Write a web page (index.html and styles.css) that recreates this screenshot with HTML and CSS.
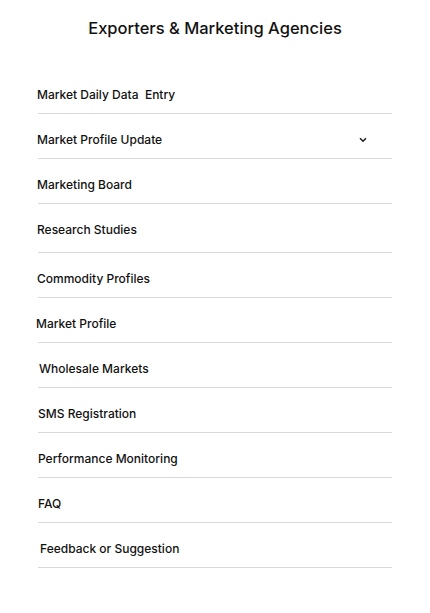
FILE: index.html
```html
<!DOCTYPE html>
<html lang="en">
<head>
<meta charset="utf-8">
<title>Exporters &amp; Marketing Agencies</title>
<link rel="stylesheet" href="styles.css">
</head>
<body>
<div class="page">
  <h1 class="title">Exporters &amp; Marketing Agencies</h1>
  <ul class="menu">
    <li class="menu-item shift-l1">Market Daily Data&nbsp; Entry</li>
    <li class="menu-item has-sub shift-l1">
      <span>Market Profile Update</span>
      <svg class="chevron" width="8" height="6" viewBox="0 0 8 6" aria-hidden="true">
        <path d="M1 1.2 L4 4.2 L7 1.2" fill="none" stroke="#222" stroke-width="1.6"/>
      </svg>
    </li>
    <li class="menu-item shift-l1">Marketing Board</li>
    <li class="menu-item tall shift-l1">Research Studies</li>
    <li class="menu-item shift-l1">Commodity Profiles</li>
    <li class="menu-item shift-l2">Market Profile</li>
    <li class="menu-item shift-r1">Wholesale Markets</li>
    <li class="menu-item">SMS Registration</li>
    <li class="menu-item">Performance Monitoring</li>
    <li class="menu-item">FAQ</li>
    <li class="menu-item shift-r2">Feedback or Suggestion</li>
  </ul>
</div>
</body>
</html>
```

FILE: styles.css
```css
* { box-sizing: border-box; }
html, body { margin: 0; padding: 0; background: #fff; }
body {
  font-family: "Inter", "Open Sans", "Liberation Sans", sans-serif;
  color: #111;
}
.page {
  padding-top: 16px;
}
.title {
  margin: 0;
  text-align: center;
  font-size: 16.5px;
  font-weight: 500;
  line-height: 24px;
  color: #111;
}
.menu {
  list-style: none;
  margin: 29px 38px 0 38px;
  padding: 0;
  width: 354px;
}
.menu-item {
  display: flex;
  align-items: center;
  justify-content: space-between;
  padding: 17px 0 9px 0;
  font-size: 12px;
  line-height: 18px;
  font-weight: 500;
  border-bottom: 1px solid #d9d9d9;
  color: #111;
}
.menu-item.tall { padding-bottom: 13px; }
.menu-item.shift-l1 { text-indent: -1px; }
.menu-item.shift-l2 { text-indent: -2px; }
.menu-item.shift-r1 { text-indent: 1px; }
.menu-item.shift-r2 { text-indent: 2px; }
.has-sub { padding-right: 25px; }
.chevron { display: block; }
```
